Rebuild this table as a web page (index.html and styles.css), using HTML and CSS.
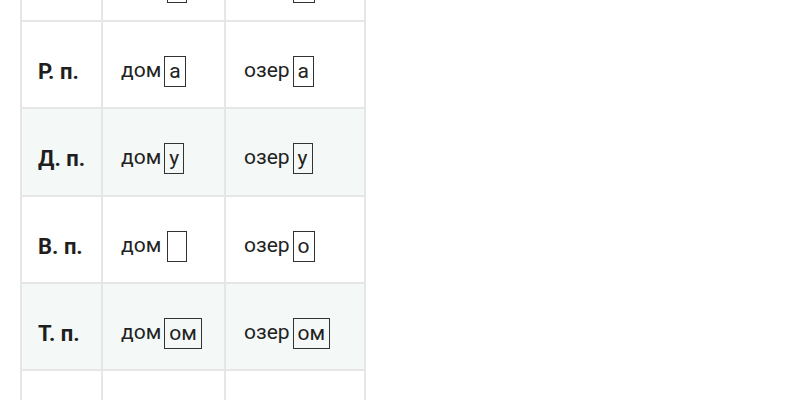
FILE: index.html
```html
<!DOCTYPE html>
<html lang="ru">
<head>
<meta charset="utf-8">
<link rel="stylesheet" href="styles.css">
</head>
<body>
<table class="cases">
  <tr class="first">
    <td class="case">И. п.</td>
    <td>дом<span class="end empty"></span></td>
    <td>озер<span class="end">о</span></td>
  </tr>
  <tr>
    <td class="case">Р. п.</td>
    <td>дом<span class="end">а</span></td>
    <td>озер<span class="end">а</span></td>
  </tr>
  <tr class="alt">
    <td class="case">Д. п.</td>
    <td>дом<span class="end">у</span></td>
    <td>озер<span class="end">у</span></td>
  </tr>
  <tr>
    <td class="case">В. п.</td>
    <td>дом<span class="end empty"></span></td>
    <td>озер<span class="end">о</span></td>
  </tr>
  <tr class="alt">
    <td class="case">Т. п.</td>
    <td>дом<span class="end">ом</span></td>
    <td>озер<span class="end">ом</span></td>
  </tr>
  <tr>
    <td class="case">П. п.</td>
    <td>о дом<span class="end">е</span></td>
    <td>об озер<span class="end">е</span></td>
  </tr>
</table>
</body>
</html>
```
FILE: styles.css
```css
html, body {
  margin: 0;
  padding: 0;
  background: #ffffff;
}
body {
  font-family: Roboto, "Liberation Sans", Arial, sans-serif;
  color: #222222;
  overflow: hidden;
}
.cases {
  border-collapse: collapse;
  margin: -67.5px 0 0 20px;
  font-size: 21px;
}
.cases td {
  border: 2px solid #e6e6e6;
  height: 87.4px;
  padding: 14px 18px 0;
  box-sizing: border-box;
  white-space: nowrap;
}
.cases td:nth-child(1) { width: 81px; padding-left: 16px; padding-right: 4px; font-size: 22px; }
.cases td:nth-child(2) { width: 123px; padding-left: 18px; padding-right: 4px; }
.cases td:nth-child(3) { width: 140px; padding-left: 18px; padding-right: 4px; }
.cases tr.first td {
  padding-top: 20px;
}
.cases .case {
  font-weight: bold;
  color: #1f1f1f;
}
.cases tr.alt td {
  background: #f4f9f7;
}
.end {
  display: inline-block;
  border: 1px solid #333333;
  padding: 0 4px;
  margin-left: 3px;
  line-height: 29px;
  height: 29px;
  vertical-align: middle;
  text-align: center;
}
.end.empty {
  width: 10px;
  margin-left: 6px;
}
```
